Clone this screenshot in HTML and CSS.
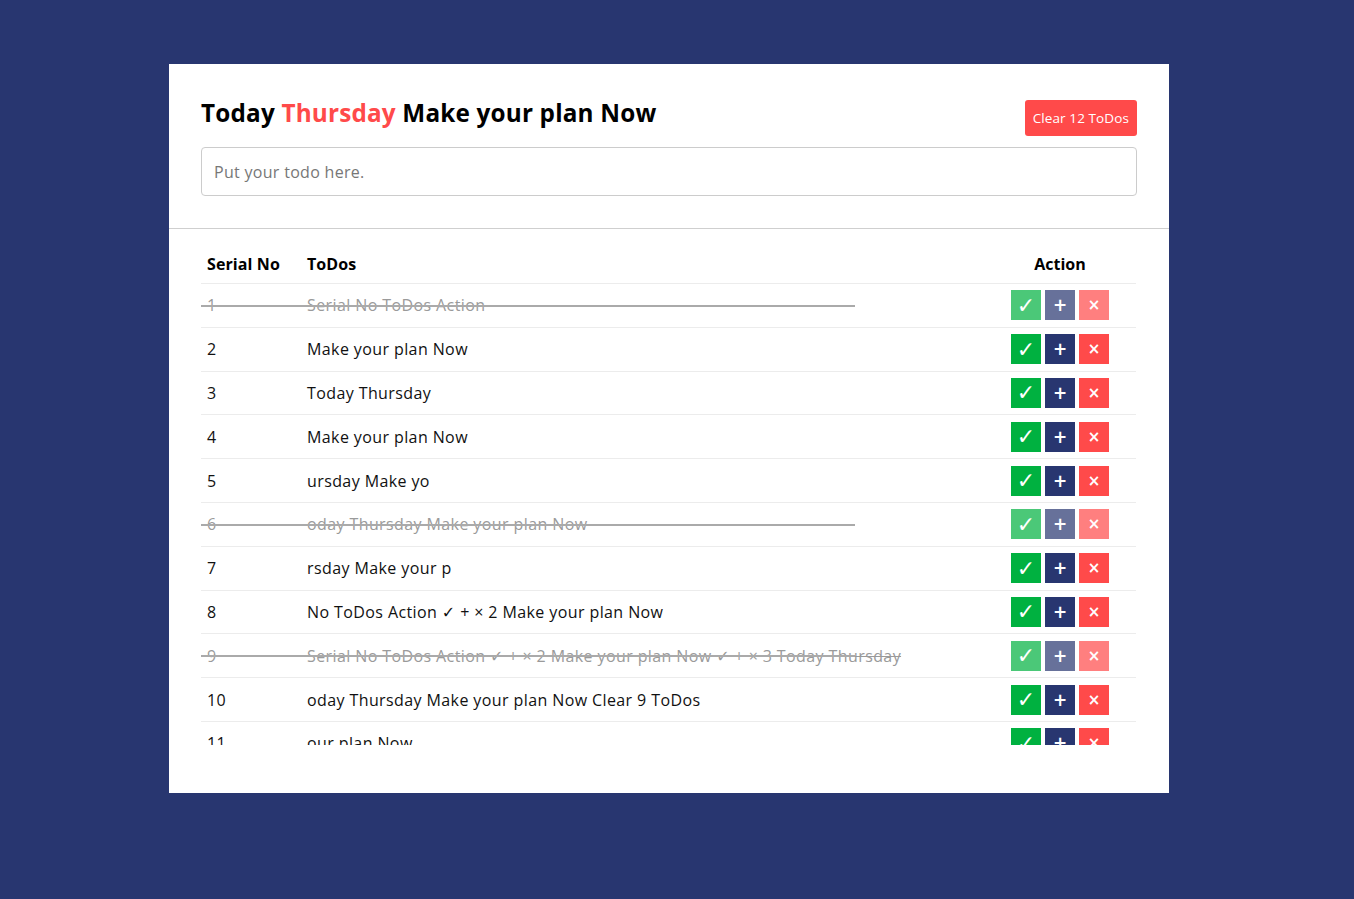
FILE: index.html
```html
<!DOCTYPE html>
<html lang="en">
<head>
<meta charset="utf-8">
<title>ToDos</title>
<link rel="stylesheet" href="styles.css">
</head>
<body>
<main class="card">
  <header class="top">
    <div class="title-row">
      <h1 class="title">Today <span class="day">Thursday</span> Make your plan Now</h1>
      <button class="clear">Clear 12 ToDos</button>
    </div>
    <input class="todo-input" type="text" placeholder="Put your todo here.">
  </header>
  <section class="list">
    <div class="scroller">
      <div class="row head">
        <div class="c-no">Serial No</div>
        <div class="c-todo">ToDos</div>
        <div class="c-act">Action</div>
      </div>
      <div class="row done">
        <div class="c-no">1</div>
        <div class="c-todo">Serial No ToDos Action</div>
        <div class="c-act"><span class="b ok">✓</span><span class="b add">+</span><span class="b del">×</span></div>
      </div>
      <div class="row">
        <div class="c-no">2</div>
        <div class="c-todo">Make your plan Now</div>
        <div class="c-act"><span class="b ok">✓</span><span class="b add">+</span><span class="b del">×</span></div>
      </div>
      <div class="row">
        <div class="c-no">3</div>
        <div class="c-todo">Today Thursday</div>
        <div class="c-act"><span class="b ok">✓</span><span class="b add">+</span><span class="b del">×</span></div>
      </div>
      <div class="row">
        <div class="c-no">4</div>
        <div class="c-todo">Make your plan Now</div>
        <div class="c-act"><span class="b ok">✓</span><span class="b add">+</span><span class="b del">×</span></div>
      </div>
      <div class="row">
        <div class="c-no">5</div>
        <div class="c-todo">ursday Make yo</div>
        <div class="c-act"><span class="b ok">✓</span><span class="b add">+</span><span class="b del">×</span></div>
      </div>
      <div class="row done">
        <div class="c-no">6</div>
        <div class="c-todo">oday Thursday Make your plan Now</div>
        <div class="c-act"><span class="b ok">✓</span><span class="b add">+</span><span class="b del">×</span></div>
      </div>
      <div class="row">
        <div class="c-no">7</div>
        <div class="c-todo">rsday Make your p</div>
        <div class="c-act"><span class="b ok">✓</span><span class="b add">+</span><span class="b del">×</span></div>
      </div>
      <div class="row">
        <div class="c-no">8</div>
        <div class="c-todo">No ToDos Action ✓ + × 2 Make your plan Now</div>
        <div class="c-act"><span class="b ok">✓</span><span class="b add">+</span><span class="b del">×</span></div>
      </div>
      <div class="row done">
        <div class="c-no">9</div>
        <div class="c-todo">Serial No ToDos Action ✓ + × 2 Make your plan Now ✓ + × 3 Today Thursday</div>
        <div class="c-act"><span class="b ok">✓</span><span class="b add">+</span><span class="b del">×</span></div>
      </div>
      <div class="row">
        <div class="c-no">10</div>
        <div class="c-todo">oday Thursday Make your plan Now Clear 9 ToDos</div>
        <div class="c-act"><span class="b ok">✓</span><span class="b add">+</span><span class="b del">×</span></div>
      </div>
      <div class="row">
        <div class="c-no">11</div>
        <div class="c-todo">our plan Now</div>
        <div class="c-act"><span class="b ok">✓</span><span class="b add">+</span><span class="b del">×</span></div>
      </div>
      <div class="row">
        <div class="c-no">12</div>
        <div class="c-todo">Make your plan Now</div>
        <div class="c-act"><span class="b ok">✓</span><span class="b add">+</span><span class="b del">×</span></div>
      </div>
    </div>
  </section>
</main>
</body>
</html>
```

FILE: styles.css
```css
* { box-sizing: border-box; }
html, body { margin: 0; padding: 0; }
body {
  background: #283670;
  font-family: "Open Sans", "DejaVu Sans", sans-serif;
  color: #111;
  padding: 64px 16px 0 0;
  min-height: 899px;
}
.card {
  width: 1000px;
  margin: 0 auto;
  background: #fff;
  padding-bottom: 48px;
}
.top {
  padding: 36px 32px 32px;
  border-bottom: 1px solid #cfcfcf;
}
.title-row {
  display: flex;
  justify-content: space-between;
  align-items: flex-start;
  height: 36px;
  margin-bottom: 11px;
}
.title {
  margin: 0;
  font-size: 24.3px;
  line-height: 26px;
  font-weight: 700;
  color: #000;
  letter-spacing: 0.18px;
}
.day { color: #ff4a4a; }
.clear {
  background: #ff4a4a;
  color: #fff;
  border: 0;
  border-radius: 3px;
  height: 36px;
  padding: 0 8px;
  font-family: inherit;
  font-size: 13.5px;
  letter-spacing: 0.1px;
}
.todo-input {
  display: block;
  width: 100%;
  height: 49px;
  border: 1px solid #cccccc;
  border-radius: 4px;
  padding: 0 12px;
  font-family: inherit;
  font-size: 16px;
  letter-spacing: 0.3px;
}
.todo-input::placeholder { color: #777; }
.list {
  padding: 16px 33px 0 32px;
}
.scroller {
  height: 500px;
  overflow: hidden;
}
.row {
  position: relative;
  display: flex;
  align-items: center;
  height: 43.8px;
  border-top: 1px solid #ececec;
  font-size: 16px;
  letter-spacing: 0.4px;
  color: #111;
}
.row.head {
  height: 38px;
  border-top: 0;
  font-weight: 700;
  letter-spacing: 0.1px;
  color: #000;
}
.c-no { width: 100px; padding-left: 6px; flex: none; }
.c-todo { flex: 1; padding-left: 6px; white-space: nowrap; }
.c-act {
  width: 152px;
  flex: none;
  display: flex;
  justify-content: center;
  gap: 4px;
  letter-spacing: 0;
}
.b {
  width: 30px;
  height: 30px;
  display: flex;
  align-items: center;
  justify-content: center;
  color: #fff;
  font-family: "DejaVu Sans", sans-serif;
  font-weight: 700;
}
.ok { background: #00b140; font-size: 22px; font-weight: 400; }
.add { background: #283670; font-size: 17px; }
.del { background: #ff4a4a; font-size: 15px; }
.row.done { color: #9a9a9a; }
.row.done .c-no, .row.done .c-todo { text-decoration: line-through; }
.row.done .b { opacity: 0.7; }
.row.done::after {
  content: "";
  position: absolute;
  left: 0;
  top: 21px;
  width: 654px;
  height: 2px;
  background: #aaaaaa;
}
```
